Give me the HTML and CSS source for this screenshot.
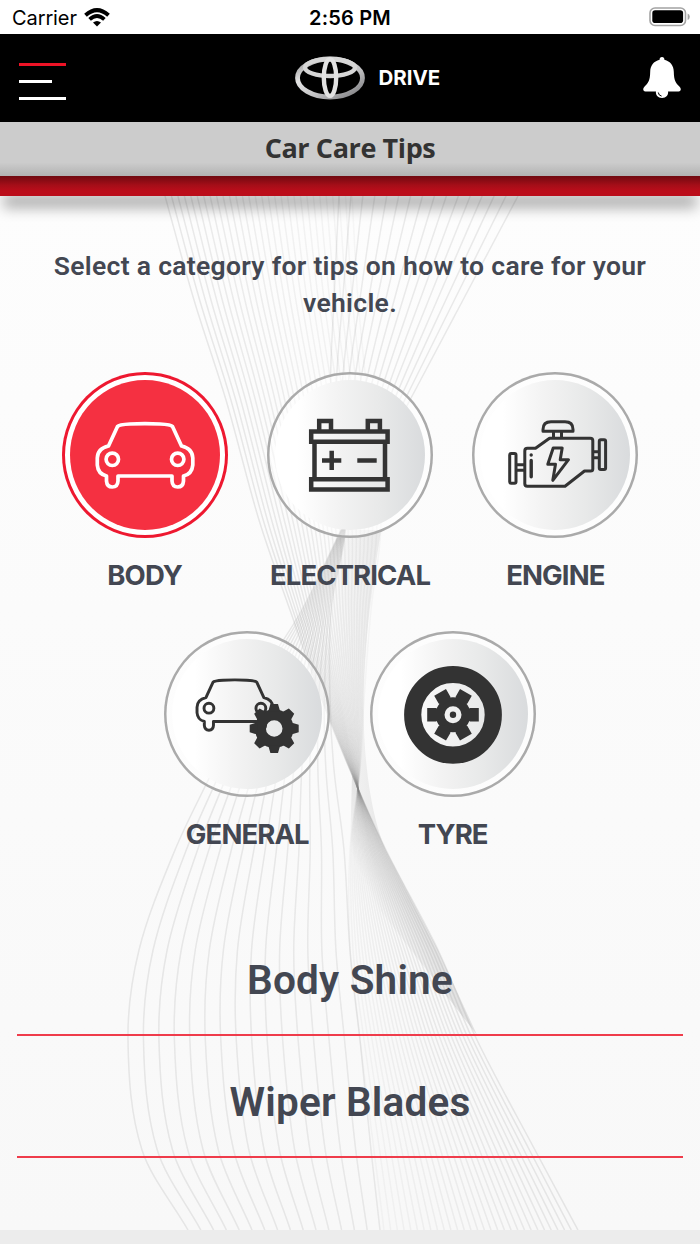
FILE: index.html
```html
<!DOCTYPE html>
<html lang="en">
<head>
  <meta charset="UTF-8">
  <title>Car Care Tips</title>
  <link rel="stylesheet" href="styles.css">
</head>
<body>
  <div class="status-bar">
    <div class="carrier">
      <span>Carrier</span>
      <svg width="26" height="19" viewBox="0 0 26 19">
        <path d="M1.500 7.300Q13-3 24.500 7.300" fill="none" stroke="#000" stroke-width="4"/>
        <path d="M5.600 11.400Q13 4.800 20.400 11.400" fill="none" stroke="#000" stroke-width="3.800"/>
        <path d="M9 14.600Q13 11.200 17 14.600L13 18.600Z"/>
      </svg>
    </div>
    <span class="time">2:56 PM</span>
    <svg class="battery" width="42" height="20" viewBox="0 0 42 20">
      <rect x="1" y="1" width="35.500" height="17.500" rx="5" fill="none" stroke="#a3a3a3" stroke-width="1.600"/>
      <rect x="3.300" y="3.300" width="30.800" height="12.800" rx="2.800"/>
      <path d="M38.600 6.600q2.200.8 2.200 3.200t-2.200 3.200z" fill="#a3a3a3"/>
    </svg>
  </div>

  <header class="header">
    <div class="menu">
      <span class="line red"></span>
      <span class="line short"></span>
      <span class="line"></span>
    </div>
    <div class="brand">
      <svg width="70" height="44" viewBox="0 0 70 44">
        <defs>
          <linearGradient id="chrome" x1="0" y1="0" x2="1" y2="1">
            <stop offset="0" stop-color="#8d8d8f"/>
            <stop offset=".3" stop-color="#e4e4e4"/>
            <stop offset=".6" stop-color="#c4c4c6"/>
            <stop offset="1" stop-color="#77777a"/>
          </linearGradient>
        </defs>
        <g fill="none" stroke="url(#chrome)">
          <ellipse cx="35" cy="22" rx="32.500" ry="19" stroke-width="4.800"/>
          <ellipse cx="35" cy="11.500" rx="25" ry="8.500" stroke="#d6d6d6" stroke-width="4.400"/>
          <ellipse cx="35" cy="21.500" rx="6.200" ry="18.400" stroke="#e2e2e2" stroke-width="4.400"/>
        </g>
      </svg>
      <span>DRIVE</span>
    </div>
    <svg class="bell" width="38" height="42" viewBox="0 0 38 42">
      <path fill="#fff" d="M19 0c1.600 0 2.400 1 2.400 2.800 6 1.500 9.300 6 9.400 12 .2 8.500 1.700 11.300 5.800 14.900 1.800 1.600 1.600 4.700-1 4.800H2.400C-.2 34.400-.4 31.300 1.400 29.700 5.500 26.100 7 23.300 7.200 14.800c.1-6 3.400-10.500 9.400-12C16.600 1 17.400 0 19 0Z"/>
      <path fill="#fff" d="M13 34h12c.8 4-2 7-6 7s-6.800-3-6-7Z"/>
      <path d="M15.300 35.500q.2 3 3.300 3.600" fill="none" stroke="#000"/>
    </svg>
  </header>

  <div class="title-bar"><h1>Car Care Tips</h1></div>
  <div class="red-strip"></div>

  <main class="content">
    <svg class="waves" id="waves" width="700" height="1034" viewBox="0 196 700 1034">
      <defs>
        <linearGradient id="fold" gradientUnits="userSpaceOnUse" x1="325" y1="0" x2="392" y2="0">
          <stop offset="0" stop-color="#999" stop-opacity="0"/>
          <stop offset="1" stop-color="#999" stop-opacity=".22"/>
        </linearGradient>
        <linearGradient id="tail" gradientUnits="userSpaceOnUse" x1="356" y1="864" x2="386" y2="850">
          <stop offset="0" stop-color="#999" stop-opacity="0"/>
          <stop offset="1" stop-color="#999" stop-opacity=".24"/>
        </linearGradient>
      </defs>
      <path fill="url(#fold)" d="M340 530H381C367 620 362 670 364 730C366 780 374 824 386 850C370 820 330 730 322 690Z"/>
      <path fill="url(#tail)" d="M352 775C362 796 374 826 386 850L438 950L477 1035L380 910L350 850Z"/>
    </svg>

    <p class="intro">Select a category for tips on how to care for your vehicle.</p>

    <div class="categories">
      <div class="category active">
        <div class="circle">
          <svg width="166" height="166" viewBox="0 0 166 166">
            <g id="car" fill="none" stroke="currentColor" stroke-width="3.700" stroke-linejoin="round">
              <path d="M55.500 54.500Q57 52.600 68 52Q83 51.200 98 52Q109 52.600 110.500 54.500L119.500 74Q130.500 76.500 130.800 86V93Q130 102 121.500 104V109Q121 115 115.700 115Q110.300 115 110 109V104H56V109Q55.700 115 50.300 115Q45 115 44.500 109V104Q36 102 35.300 93V86Q35.500 76.500 46.500 74Z"/>
              <circle cx="50.300" cy="87.300" r="6.200"/>
              <circle cx="115.700" cy="87.300" r="6.200"/>
            </g>
          </svg>
        </div>
        <span>BODY</span>
      </div>

      <div class="category">
        <div class="circle">
          <svg width="166" height="166" viewBox="0 0 166 166">
            <g fill="none" stroke="currentColor" stroke-width="4.500">
              <path d="M44.200 59.500H120.600V69.700H44.200ZM44.200 107.200H120.600V117.500H44.200Z"/>
              <path d="M47.500 70V107M118 70V107"/>
              <path d="M52.200 59V48.900H64V59M100.800 59V48.900H112.900V59"/>
              <path d="M55 88.400H74.300M64.700 78.800V98M90.300 88.400H109.700"/>
            </g>
          </svg>
        </div>
        <span>ELECTRICAL</span>
      </div>

      <div class="category">
        <div class="circle">
          <svg width="166" height="166" viewBox="0 0 166 166">
            <g fill="none" stroke="currentColor" stroke-width="3" stroke-linejoin="round">
              <rect x="37.700" y="81.500" width="6.300" height="29.700" rx="1.500"/>
              <rect x="127.300" y="67.800" width="6.300" height="29.700" rx="1.500"/>
              <path d="M45 92.700H52M45 98.200H52M121 79.700H127M121 85.700H127"/>
              <path d="M63.500 76.300L77.500 66.300H118.300Q120.800 66.300 120.800 68.800V97Q120.800 99 118.500 99H112.500L93 114.300H55.300Q52.800 114.300 52.800 111.800V79Q52.800 76.300 55.500 76.300Z"/>
              <path d="M71 59.300V57.500Q71 49.800 79 49.800H93Q101 49.800 101 57.500V59.300ZM81.500 60V66M89.500 60V66"/>
              <path d="M81.200 76H90.200L88.200 87.700H96.500L80.800 108.300L83.500 92.300H75.800Z"/>
              <path d="M59.200 88.500V104.700M59.200 82.900V83" stroke-width="3.400" stroke-linecap="round"/>
            </g>
          </svg>
        </div>
        <span>ENGINE</span>
      </div>

      <div class="category">
        <div class="circle">
          <svg width="166" height="166" viewBox="0 0 166 166">
            <use href="#car" transform="translate(5 7.900) scale(.794)"/>
            <g transform="translate(110.200 97.500)" fill="none" stroke="currentColor">
              <circle r="13.800" stroke-width="11"/>
              <g fill="currentColor" stroke="none">
                <path id="tooth" d="M-6-17L-3.800-24.500H3.800L6-17ZM-6 17L-3.800 24.500H3.800L6 17Z"/>
                <use href="#tooth" transform="rotate(45)"/>
                <use href="#tooth" transform="rotate(90)"/>
                <use href="#tooth" transform="rotate(135)"/>
              </g>
            </g>
          </svg>
        </div>
        <span>GENERAL</span>
      </div>

      <div class="category">
        <div class="circle">
          <svg width="166" height="166" viewBox="0 0 166 166">
            <g transform="translate(83 83.800)" fill="currentColor">
              <circle r="40.300" fill="none" stroke="currentColor" stroke-width="17.200"/>
              <circle r="13" fill="none" stroke="currentColor" stroke-width="9"/>
              <path id="spoke" d="M14-4.500L17-6.800H25.800V6.800H17L14 4.500ZM-14-4.500L-17-6.800H-25.800V6.800H-17L-14 4.500Z"/>
              <use href="#spoke" transform="rotate(60)"/>
              <use href="#spoke" transform="rotate(120)"/>
              <circle r="3.200"/>
            </g>
          </svg>
        </div>
        <span>TYRE</span>
      </div>
    </div>

    <ul class="tips">
      <li>Body Shine</li>
      <li>Wiper Blades</li>
    </ul>
  </main>

  <script src="waves.js"></script>
</body>
</html>
```
FILE: styles.css
```css
* {
  box-sizing: border-box;
}
body {
  margin: 0;
  width: 700px;
  height: 1244px;
  overflow: hidden;
  background-color: #ececec;
  font-family: Inter, "Open Sans", sans-serif;
  color: #434752;
}
svg {
  display: block;
}
.status-bar {
  height: 34px;
  padding: 0 9px 0 12px;
  display: grid;
  grid-template-columns: 1fr auto 1fr;
  align-items: center;
  background-color: #fff;
  color: #000;
  font-size: 20px;
}
.carrier {
  display: flex;
  align-items: center;
  gap: 7px;
  padding-top: 1px;
  letter-spacing: -0.1px;
}
.time {
  margin-left: -3px;
  padding-top: 2px;
  font-weight: 600;
  letter-spacing: 0.2px;
}
.battery {
  justify-self: end;
}
.header {
  height: 88px;
  padding: 0 19px;
  display: grid;
  grid-template-columns: 1fr auto 1fr;
  align-items: center;
  background-color: #000;
}
.menu {
  display: flex;
  flex-direction: column;
  gap: 14px;
  padding-top: 6px;
}
.line {
  width: 47px;
  height: 3px;
  background-color: #fff;
}
.line.red {
  background-color: #ee1326;
}
.line.short {
  width: 33px;
}
.brand {
  display: flex;
  align-items: center;
  gap: 14px;
  margin-left: 36px;
  color: #fff;
  font-size: 20.500px;
  font-weight: 700;
}
.brand span {
  width: 63px;
  margin-top: -2px;
}
.bell {
  justify-self: end;
}
.title-bar {
  height: 54px;
  padding-bottom: 4px;
  display: flex;
  justify-content: center;
  align-items: center;
  background: linear-gradient(#ccc 75%, #b2b2b2);
}
.title-bar h1 {
  margin: 0;
  font-family: "Open Sans", sans-serif;
  font-size: 27px;
  font-weight: 700;
  letter-spacing: -0.4px;
  color: #333;
}
.red-strip {
  position: relative;
  z-index: 1;
  height: 20px;
  background: linear-gradient(#700910, #a40e18 45%, #bb0d1a 75%);
  box-shadow: 0 15px 14px -3px rgba(0,0,0,0.32);
}
.content {
  position: relative;
  height: 1034px;
  padding-top: 51px;
  overflow: hidden;
  background: linear-gradient(#fdfdfd, #f8f8f8);
}
/* decorative background behind the content */
.waves {
  position: absolute;
  left: 0;
  top: 0;
}
.intro,
.categories,
.tips {
  position: relative;
}
.intro {
  margin: 0 auto;
  width: 640px;
  text-align: center;
  font-family: Roboto, sans-serif;
  font-size: 26.500px;
  font-weight: 600;
  line-height: 37px;
  letter-spacing: 0.3px;
}
.categories {
  margin-top: 51px;
  display: flex;
  flex-wrap: wrap;
  justify-content: center;
  gap: 34px 39.400px;
}
.category {
  width: 166px;
  display: flex;
  flex-direction: column;
  align-items: center;
}
.category span {
  margin-top: 16px;
  line-height: 42.500px;
  font-size: 27.500px;
  font-weight: 700;
  letter-spacing: -0.9px;
  white-space: nowrap;
}
.circle {
  position: relative;
  width: 166px;
  height: 166px;
  border-radius: 50%;
  box-shadow: inset 0 0 0 2.500px #aaa;
  color: #333;
  background: radial-gradient(circle, transparent 74px, rgba(255,255,255,0.5) 75px);
}
.circle::before {
  content: "";
  position: absolute;
  inset: 8px;
  border-radius: 50%;
  background: linear-gradient(90deg, #fff 15%, #f3f3f3 42%, #e8e9e9 70%, #d9dbdd);
}
.circle svg {
  position: relative;
}
.active .circle {
  color: #fff;
  background: #fff;
  box-shadow: inset 0 0 0 3px #ee1830;
}
.active .circle::before {
  background: #f53041;
}
.tips {
  list-style: none;
  margin: 59px 17px 0;
  padding: 0;
}
.tips li {
  height: 122px;
  padding-top: 12px;
  border-bottom: 2px solid #ef3c4b;
  display: flex;
  justify-content: center;
  align-items: center;
  font-family: Roboto, sans-serif;
  font-size: 40.500px;
  font-weight: 600;
  letter-spacing: 0.2px;
}
```
FILE: waves.js
```js
const svg = document.getElementById('waves');

// y positions shared by every guide curve
const ys = [196, 300, 400, 520, 610, 700, 770, 850, 950, 1040, 1150, 1230];

const left = [165, 194, 226, 259, 290, 322, 350, 386, 438, 477, 535, 578];
const leftInner = [352, 358, 368, 381, 371, 364, 360, 350, 350, 360, 374, 384];
const right = [518, 463, 410, 346, 302, 245, 213, 175, 139, 128, 142, 188];
const rightInner = [339, 334, 331, 346, 331, 330, 334, 344, 350, 360, 371, 380];

function curve(xs) {
  let d = `M${xs[0]} ${ys[0]}`;
  for (let i = 0; i < xs.length - 1; i++) {
    const j = i + 1;
    const h = (ys[j] - ys[i]) / 3;
    d += `C${xs[i] + slope(xs, i) * h} ${ys[i] + h} ${xs[j] - slope(xs, j) * h} ${ys[j] - h} ${xs[j]} ${ys[j]}`;
  }
  return d;
}

function slope(xs, i) {
  const a = Math.max(i - 1, 0);
  const b = Math.min(i + 1, xs.length - 1);
  return (xs[b] - xs[a]) / (ys[b] - ys[a]);
}

function drawLines(from, to, count, opacity, fade) {
  for (let n = 0; n < count; n++) {
    const t = n / (count - 1);
    const path = document.createElementNS('http://www.w3.org/2000/svg', 'path');
    path.setAttribute('d', curve(from.map((x, i) => x + (to[i] - x) * t)));
    path.setAttribute('fill', 'none');
    path.setAttribute('stroke', '#8a8a8a');
    path.setAttribute('stroke-width', 1.5);
    path.setAttribute('stroke-opacity', opacity * (1 - t * fade));
    svg.appendChild(path);
  }
}

drawLines(left, leftInner, 30, 0.18, 0.65);
drawLines(right, rightInner, 16, 0.17, 0.1);
```
